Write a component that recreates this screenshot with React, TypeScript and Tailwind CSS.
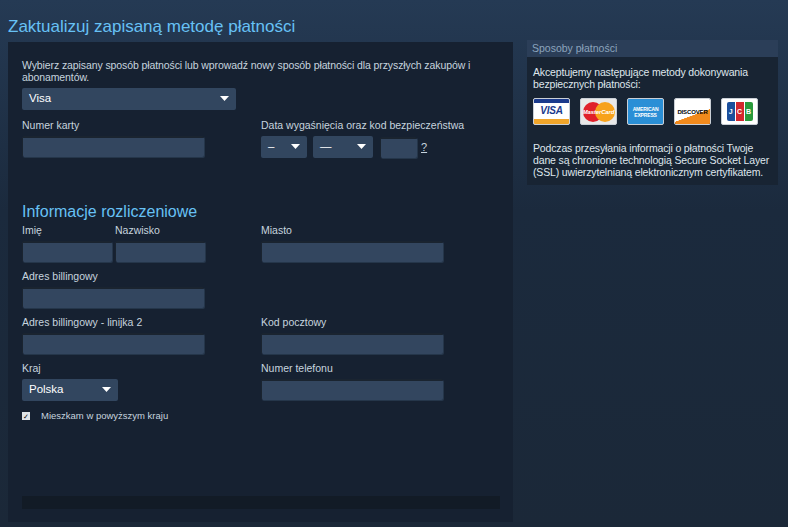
import React from "react";

const F = { fontFamily: "'Liberation Sans', Arial, sans-serif" };

function Input({ w }: { w: string }) {
  return <div className={`${w} h-[21px] bg-[#33465f] border-t-2 border-l border-[#1a2430] rounded-[2px] shadow-[1px_1px_0_#25364a]`} />;
}
function Select({ w, label }: { w: string; label: string }) {
  return (
    <div className={`${w} h-[22px] bg-[#32465f] rounded-[2px] flex items-center justify-between px-[7px] text-[11.5px] text-white`}>
      <span>{label}</span>
      <svg width="9" height="6" viewBox="0 0 9 6"><path d="M0 0h9L4.5 5z" fill="#fff" /></svg>
    </div>
  );
}
function Label({ children }: { children: React.ReactNode }) {
  return <div className="text-[10.5px] text-[#c6d4df] h-[12px] leading-[12px] mb-[5px]">{children}</div>;
}

function Card({ children, bg }: { children: React.ReactNode; bg: string }) {
  return (
    <div className={`w-[37px] h-[27px] rounded-[2px] border border-[#c9cfd6] ${bg} flex items-center justify-center overflow-hidden text-[8px] font-bold italic`}>
      {children}
    </div>
  );
}

export default function App() {
  return (
    <div style={F} className="w-[788px] h-[527px] overflow-hidden bg-[linear-gradient(180deg,#253a54_0%,#1b2a3d_40%,#1b2838_100%)] relative">
      <div className="flex pl-[8px] pt-[16px] gap-[14px]">
        <div className="w-[505px]">
          <div className="text-[17px] text-[#67c1f5] leading-[22px] mb-[4px]">Zaktualizuj zapisaną metodę płatności</div>
          <div className="bg-[#162131] h-[480px] px-[14px] pt-[17px] flex flex-col">
            <div className="text-[10.5px] text-[#c6d4df] leading-[12px] mb-[5px] tracking-[-0.1px]">Wybierz zapisany sposób płatności lub wprowadź nowy sposób płatności dla przyszłych zakupów i abonamentów.</div>
            <Select w="w-[214px]" label="Visa" />
            <div className="flex mt-[9px]">
              <div className="w-[239px]">
                <Label>Numer karty</Label>
                <Input w="w-[182px]" />
              </div>
              <div>
                <Label>Data wygaśnięcia oraz kod bezpieczeństwa</Label>
                <div className="flex items-center">
                  <Select w="w-[46px]" label="–" />
                  <div className="w-[6px]" />
                  <Select w="w-[60px]" label="—" />
                  <div className="w-[7px]" />
                  <Input w="w-[37px]" />
                  <span className="ml-[4px] text-[11px] text-[#c6d4df] underline">?</span>
                </div>
              </div>
            </div>
            <div className="text-[16px] text-[#67c1f5] mt-[45px] leading-[18px] mb-[3px]">Informacje rozliczeniowe</div>
            <div className="grid grid-cols-[239px_1fr] gap-y-[8px]">
              <div className="flex gap-[3px]">
                <div><Label>Imię</Label><Input w="w-[90px]" /></div>
                <div><Label>Nazwisko</Label><Input w="w-[90px]" /></div>
              </div>
              <div><Label>Miasto</Label><Input w="w-[182px]" /></div>
              <div><Label>Adres billingowy</Label><Input w="w-[182px]" /></div>
              <div />
              <div><Label>Adres billingowy - linijka 2</Label><Input w="w-[182px]" /></div>
              <div><Label>Kod pocztowy</Label><Input w="w-[182px]" /></div>
              <div><Label>Kraj</Label><Select w="w-[96px]" label="Polska" /></div>
              <div><Label>Numer telefonu</Label><Input w="w-[182px]" /></div>
            </div>
            <div className="flex items-center mt-[8px] text-[9.5px] text-[#c6d4df]">
              <div className="w-[8px] h-[8px] bg-[#dfe4e8] flex items-center justify-center text-[7px] text-black leading-none">✓</div>
              <span className="ml-[11px]">Mieszkam w powyższym kraju</span>
            </div>
            <div className="mt-auto mb-[13px] h-[13px] bg-[#121b26] w-[478px]" />
          </div>
        </div>
        <div className="w-[251px] mt-[24px]">
          <div className="h-[17px] bg-[#2b3e58] text-[10.5px] text-[#8ba4bd] px-[5px] leading-[17px]">Sposoby płatności</div>
          <div className="bg-[#182433] px-[6px] pt-[9px] pb-[7px] text-[10.5px] text-[#dfe6ec] leading-[12px] tracking-[-0.15px]">
            <div>Akceptujemy następujące metody dokonywania bezpiecznych płatności:</div>
            <div className="flex gap-[10px] mt-[8px] mb-[17px]">
              <Card bg="bg-white">
                <div className="w-full h-full flex flex-col">
                  <div className="h-[4px] bg-[#1a3a8c]" />
                  <div className="flex-1 flex items-center justify-center text-[#1a3a8c] text-[10px]">VISA</div>
                  <div className="h-[5px] bg-[#f0a52a]" />
                </div>
              </Card>
              <Card bg="bg-[#e8e8e8]">
                <div className="relative w-[32px] h-[20px]">
                  <div className="absolute left-0 top-0 w-[20px] h-[20px] rounded-full bg-[#e0202a]" />
                  <div className="absolute right-0 top-0 w-[20px] h-[20px] rounded-full bg-[#f7a21b]" />
                  <div className="absolute inset-0 flex items-center justify-center text-white text-[6px]">MasterCard</div>
                </div>
              </Card>
              <Card bg="bg-[#2a8fd6]">
                <div className="text-white text-[5px] leading-[6px] text-center not-italic">AMERICAN<br />EXPRESS</div>
              </Card>
              <Card bg="bg-white">
                <div className="w-full h-full flex flex-col items-center justify-center bg-[linear-gradient(160deg,#fff_60%,#f28a1c_61%)]">
                  <div className="text-[6px] text-black not-italic">DISCOVER</div>
                </div>
              </Card>
              <Card bg="bg-white">
                <div className="flex gap-[1px] h-[19px]">
                  <div className="w-[8px] bg-[#1b4f9c] rounded-l-[2px] text-white text-[7px] flex items-center justify-center not-italic">J</div>
                  <div className="w-[8px] bg-[#d3272e] text-white text-[7px] flex items-center justify-center not-italic">C</div>
                  <div className="w-[8px] bg-[#2a9a3c] rounded-r-[2px] text-white text-[7px] flex items-center justify-center not-italic">B</div>
                </div>
              </Card>
            </div>
            <div>Podczas przesyłania informacji o płatności Twoje dane są chronione technologią Secure Socket Layer (SSL) uwierzytelnianą elektronicznym certyfikatem.</div>
          </div>
        </div>
      </div>
    </div>
  );
}
